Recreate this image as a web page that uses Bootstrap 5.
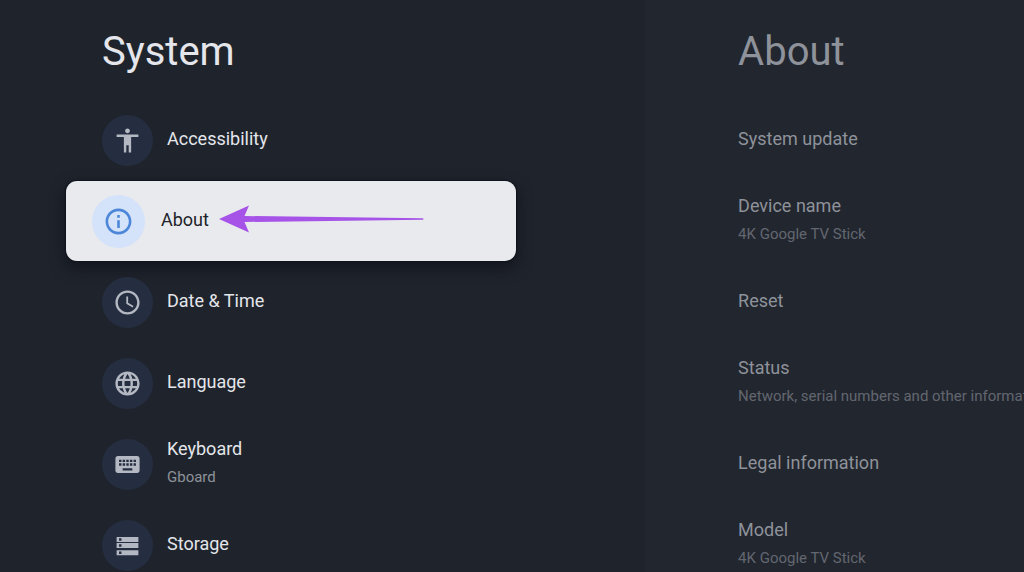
<!DOCTYPE html>
<html lang="en">
<head>
<meta charset="utf-8">
<meta name="viewport" content="width=device-width, initial-scale=1">
<title>System settings</title>
<link href="https://cdn.jsdelivr.net/npm/bootstrap@5.3.0/dist/css/bootstrap.min.css" rel="stylesheet">
<style>
  body { background: #1f242c; color: #e4e6eb; font-family: Roboto, "Liberation Sans", sans-serif; }
  .main-pane { width: 63%; }
  .side-pane { background: #22262f; min-width: 0; padding-left: 93px; }
  .pane-title { height: 100px; padding-top: 26px; margin: 0; font-size: 40px; line-height: 52px; font-weight: 400; }
  .main-pane .pane-title { padding-left: 102px; }
  .side-pane .pane-title { color: #8e929a; }
  .entry { height: 81px; border: 0; background: none; color: inherit; text-align: left; white-space: nowrap; }
  .main-pane .entry { padding: 0 0 0 102px; gap: 14px; }
  .side-pane .entry { padding: 0; color: #8e929a; }
  .entry-text { font-size: 18px; line-height: 29px; padding-bottom: 4px; }
  .entry-text small { font-size: 15px; color: #8e929a; }
  .side-pane .entry-text small { color: #62666f; }
  .disc { width: 51px; height: 51px; background: #252e40; color: #b4b8c2; }
  .disc svg { width: 29px; height: 29px; fill: currentColor; }
  .main-pane .entry.selected { height: 80px; margin: 0 129px 1px 66px; padding-left: 26px; gap: 16px; border-radius: 11px; background: #e9eaee; color: #202329; box-shadow: 0 0 1px 1px #10131b, 0 6px 14px 2px #10131bcc; }
  .selected .disc { width: 53px; height: 53px; background: #d4e2fa; color: #4b86d8; }
  .selected .disc svg { width: 31px; height: 31px; }
  .pointer { width: 205px; height: 28px; margin-left: -6px; margin-bottom: 4px; }
</style>
</head>
<body>
<div class="d-flex vh-100 overflow-hidden">
  <main class="main-pane flex-shrink-0 d-flex flex-column">
    <h1 class="pane-title flex-shrink-0">System</h1>
    <button type="button" class="entry d-flex align-items-center flex-shrink-0">
      <span class="disc rounded-circle d-flex align-items-center justify-content-center flex-shrink-0"><svg viewBox="0 0 24 24" aria-hidden="true"><path d="M12 2c1.100 0 2 .9 2 2s-.9 2-2 2-2-.9-2-2 .9-2 2-2zm9 7h-6v13h-2v-6h-2v6H9V9H3V7h18v2z"/></svg></span>
      <span class="entry-text">Accessibility</span>
    </button>
    <button type="button" class="entry selected d-flex align-items-center flex-shrink-0">
      <span class="disc rounded-circle d-flex align-items-center justify-content-center flex-shrink-0"><svg viewBox="0 0 24 24" aria-hidden="true"><path d="M11 7h2v2h-2zm0 4h2v6h-2zm1-9C6.480 2 2 6.480 2 12s4.480 10 10 10 10-4.480 10-10S17.520 2 12 2zm0 18c-4.410 0-8-3.590-8-8s3.590-8 8-8 8 3.590 8 8-3.590 8-8 8z"/></svg></span>
      <span class="entry-text">About</span>
      <svg class="pointer" viewBox="0 0 205 28" aria-hidden="true"><path fill="#a653e8" d="M0 14 30 .5 25.500 11 204 13.200Q205 14 204 14.800L25.500 17 30 27.500Z"/></svg>
    </button>
    <button type="button" class="entry d-flex align-items-center flex-shrink-0">
      <span class="disc rounded-circle d-flex align-items-center justify-content-center flex-shrink-0"><svg viewBox="0 0 24 24" aria-hidden="true"><path d="M11.990 2C6.470 2 2 6.480 2 12s4.470 10 9.990 10C17.520 22 22 17.520 22 12S17.520 2 11.990 2zM12 20c-4.420 0-8-3.580-8-8s3.580-8 8-8 8 3.580 8 8-3.580 8-8 8zm.5-13H11v6l5.250 3.150.75-1.230-4.500-2.670z"/></svg></span>
      <span class="entry-text">Date &amp; Time</span>
    </button>
    <button type="button" class="entry d-flex align-items-center flex-shrink-0">
      <span class="disc rounded-circle d-flex align-items-center justify-content-center flex-shrink-0"><svg viewBox="0 0 24 24" aria-hidden="true"><path d="M11.990 2C6.470 2 2 6.480 2 12s4.470 10 9.990 10C17.520 22 22 17.520 22 12S17.520 2 11.990 2zm6.930 6h-2.950c-.32-1.250-.78-2.450-1.380-3.560 1.840.63 3.370 1.910 4.330 3.560zM12 4.040c.83 1.200 1.480 2.530 1.910 3.960h-3.820c.43-1.430 1.080-2.760 1.910-3.960zM4.260 14C4.100 13.360 4 12.690 4 12s.1-1.360.26-2h3.380c-.08.66-.14 1.320-.14 2 0 .68.06 1.340.14 2H4.260zm.82 2h2.950c.32 1.250.78 2.450 1.380 3.560-1.840-.63-3.370-1.900-4.330-3.560zm2.950-8H5.080c.96-1.660 2.490-2.930 4.330-3.560C8.810 5.550 8.350 6.750 8.030 8zM12 19.960c-.83-1.200-1.480-2.530-1.910-3.960h3.820c-.43 1.430-1.080 2.760-1.910 3.960zM14.340 14H9.660c-.09-.66-.16-1.320-.16-2 0-.68.07-1.350.16-2h4.680c.09.65.16 1.320.16 2 0 .68-.07 1.340-.16 2zm.25 5.560c.6-1.110 1.060-2.310 1.380-3.560h2.950c-.96 1.650-2.490 2.930-4.330 3.560zM16.360 14c.08-.66.14-1.320.14-2 0-.68-.06-1.340-.14-2h3.380c.16.64.26 1.310.26 2s-.1 1.360-.26 2h-3.380z"/></svg></span>
      <span class="entry-text">Language</span>
    </button>
    <button type="button" class="entry d-flex align-items-center flex-shrink-0">
      <span class="disc rounded-circle d-flex align-items-center justify-content-center flex-shrink-0"><svg viewBox="0 0 24 24" aria-hidden="true"><path d="M20 5H4c-1.100 0-1.990.9-1.990 2L2 17c0 1.100.9 2 2 2h16c1.100 0 2-.9 2-2V7c0-1.100-.9-2-2-2zm-9 3h2v2h-2V8zm0 3h2v2h-2v-2zM8 8h2v2H8V8zm0 3h2v2H8v-2zm-1 2H5v-2h2v2zm0-3H5V8h2v2zm9 7H8v-2h8v2zm0-4h-2v-2h2v2zm0-3h-2V8h2v2zm3 3h-2v-2h2v2zm0-3h-2V8h2v2z"/></svg></span>
      <span class="entry-text d-flex flex-column">Keyboard <small>Gboard</small></span>
    </button>
    <button type="button" class="entry d-flex align-items-center flex-shrink-0">
      <span class="disc rounded-circle d-flex align-items-center justify-content-center flex-shrink-0"><svg viewBox="0 0 24 24" aria-hidden="true"><path d="M3 20h18v-4H3v4zm2-3h2v2H5v-2zM3 5v4h18V5H3zm4 3H5V6h2v2zm-4 6h18v-4H3v4zm2-3h2v2H5v-2z"/></svg></span>
      <span class="entry-text">Storage</span>
    </button>
  </main>
  <section class="side-pane flex-grow-1 d-flex flex-column overflow-hidden">
    <h2 class="pane-title flex-shrink-0">About</h2>
    <button type="button" class="entry d-flex align-items-center flex-shrink-0"><span class="entry-text">System update</span></button>
    <button type="button" class="entry d-flex align-items-center flex-shrink-0"><span class="entry-text d-flex flex-column">Device name <small>4K Google TV Stick</small></span></button>
    <button type="button" class="entry d-flex align-items-center flex-shrink-0"><span class="entry-text">Reset</span></button>
    <button type="button" class="entry d-flex align-items-center flex-shrink-0"><span class="entry-text d-flex flex-column">Status <small>Network, serial numbers and other information</small></span></button>
    <button type="button" class="entry d-flex align-items-center flex-shrink-0"><span class="entry-text">Legal information</span></button>
    <button type="button" class="entry d-flex align-items-center flex-shrink-0"><span class="entry-text d-flex flex-column">Model <small>4K Google TV Stick</small></span></button>
  </section>
</div>
<script src="https://cdn.jsdelivr.net/npm/bootstrap@5.3.0/dist/js/bootstrap.bundle.min.js"></script>
</body>
</html>
